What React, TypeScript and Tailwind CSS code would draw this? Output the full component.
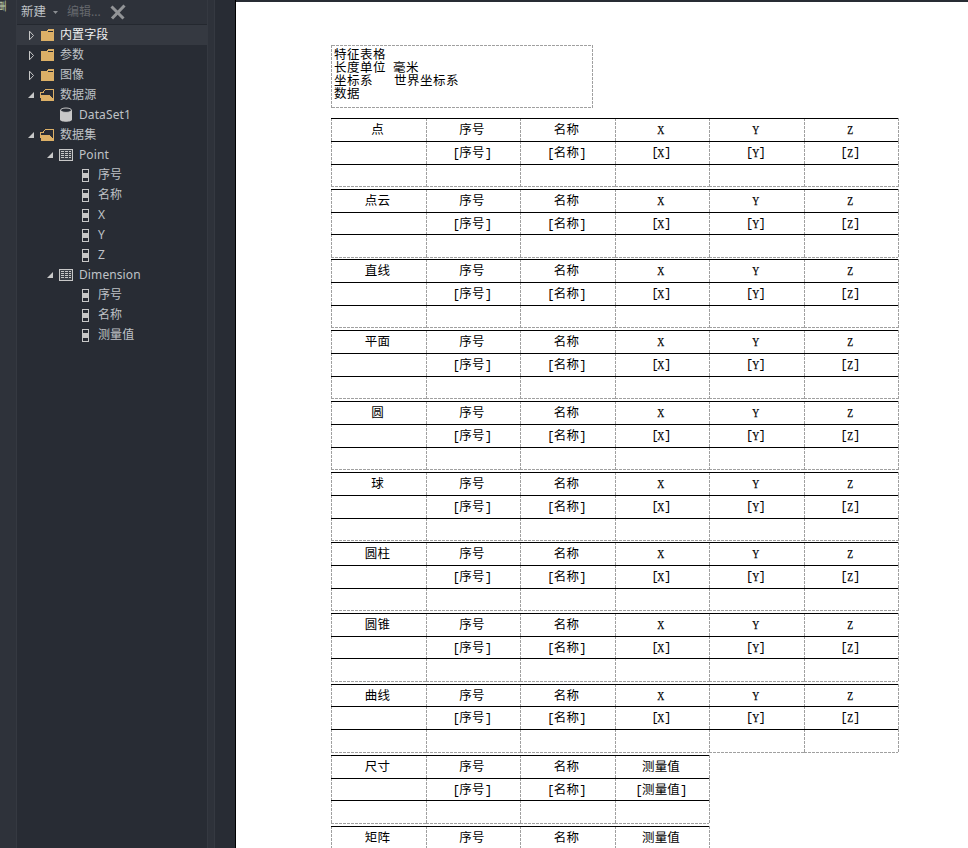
import React from "react";

type Kind = "folder" | "open" | "db" | "table" | "field";
type Node = { label: string; kind: Kind; level: number; active?: boolean };

const nodes: Node[] = [
  { label: "内置字段", kind: "folder", level: 0, active: true },
  { label: "参数", kind: "folder", level: 0 },
  { label: "图像", kind: "folder", level: 0 },
  { label: "数据源", kind: "open", level: 0 },
  { label: "DataSet1", kind: "db", level: 1 },
  { label: "数据集", kind: "open", level: 0 },
  { label: "Point", kind: "table", level: 1 },
  { label: "序号", kind: "field", level: 2 },
  { label: "名称", kind: "field", level: 2 },
  { label: "X", kind: "field", level: 2 },
  { label: "Y", kind: "field", level: 2 },
  { label: "Z", kind: "field", level: 2 },
  { label: "Dimension", kind: "table", level: 1 },
  { label: "序号", kind: "field", level: 2 },
  { label: "名称", kind: "field", level: 2 },
  { label: "测量值", kind: "field", level: 2 },
];

const indent = ["pl-[10px]", "pl-[29px]", "pl-[48px]"];

function Arrow({ kind }: { kind: Kind }) {
  return (
    <svg className="h-5 w-[10px] shrink-0" viewBox="0 0 10 20" fill="none">
      {kind === "folder" && <path d="M2.5 6.2v8.6l4-4.3z" stroke="#c8c8c8" />}
      {(kind === "open" || kind === "table") && <path d="M7 7v6H1z" fill="#c8c8c8" />}
    </svg>
  );
}

function Icon({ kind }: { kind: Kind }) {
  return (
    <svg className="ml-[3px] h-5 w-[18px] shrink-0" viewBox="0 0 18 20" fill="none" shapeRendering="crispEdges">
      {kind === "folder" && (
        <>
          <path d="M1 6h6V5h1V4h6v12H1z" fill="#dcb067" />
          <path d="M8 6.5h5" stroke="#282c34" />
        </>
      )}
      {kind === "open" && (
        <g>
          <path d="M.5 12V7.5h3v-1l2-2h8v11" stroke="#dcb067" />
          <path d="M0 10h9l4 4v2H1z" fill="#dcb067" />
        </g>
      )}
      {kind === "db" && (
        <g shapeRendering="auto">
          <path d="M1 5v9.5c0 3 12 3 12 0V5z" fill="#c8c8c8" />
          <ellipse cx="7" cy="5.2" rx="5.5" ry="2.2" fill="#282c34" stroke="#c8c8c8" />
        </g>
      )}
      {kind === "table" && (
        <>
          <path d="M.5 4.5h13v11H.5z" fill="#3c4047" stroke="#c8c8c8" />
          <path
            d="M2 6.5h10M2 8.5h10M2 10.5h10M2 12.5h10"
            stroke="#c8c8c8"
            strokeDasharray="3 1"
          />
        </>
      )}
      {kind === "field" && (
        <>
          <path d="M4 4h7v13H4z" fill="#c8c8c8" />
          <path d="M5 5h5v3H5zM5 13h5v3H5z" fill="#282c34" />
        </>
      )}
    </svg>
  );
}

function Sidebar() {
  return (
    <aside className="flex h-full w-[236px] shrink-0 bg-[#282c34] font-['Noto_Sans','Noto_Sans_CJK_SC',sans-serif] text-[12px] text-[#bfc2c6]">
      <div className="h-full w-4 shrink-0 overflow-hidden bg-[#2e323a]">
        <div className="-ml-[5px] h-3 w-3 -rotate-90 text-[12px] leading-[12px] text-[#b5c4a5]">量</div>
      </div>
      <div className="h-full w-[192px] shrink-0 border-x border-[#353941]">
        <div className="flex h-[25px] items-center border-b border-[#24282f] bg-[#2e323a] pl-[4px]">
          <span className="w-[26px] whitespace-nowrap text-[12.5px] leading-5">新建</span>
          <svg className="ml-[6px] h-[3px] w-[5px]" viewBox="0 0 5 3">
            <path d="M0 0h5L2.5 3z" fill="#8b8e92" />
          </svg>
          <span className="ml-[9px] w-[34px] whitespace-nowrap text-[12px] leading-5 text-[#65686d]">编辑...</span>
          <svg className="ml-[9px] h-4 w-4" viewBox="0 0 16 16">
            <path d="M1.5 2.5l12 12M14.5 1.5L2 14.5" stroke="#929497" strokeWidth="3" />
          </svg>
        </div>
        {nodes.map((n, i) => (
          <div
            key={i}
            className={`flex h-5 items-center ${indent[n.level]} ${n.active ? "bg-[#353941] text-[#f0f0f0]" : ""}`}
          >
            <Arrow kind={n.kind} />
            <Icon kind={n.kind} />
            <span className="ml-[2px] whitespace-nowrap leading-5 tracking-[0.1px]">{n.label}</span>
          </div>
        ))}
      </div>
      <div className="h-full w-[7px] shrink-0 border-r border-[#353941] bg-[#2e323a]" />
      <div className="h-full grow border-r border-black" />
    </aside>
  );
}

const xyz = ["序号", "名称", "X", "Y", "Z"];
const measured = ["序号", "名称", "测量值"];
type Block = { title: string; rows: [string, string, string]; gap: string; fields: string[] };

const blocks: Block[] = [
  { title: "点", rows: ["h-[23px]", "h-[23px]", "h-[23px]"], gap: "mb-[2px]", fields: xyz },
  { title: "点云", rows: ["h-[23px]", "h-[22px]", "h-[24px]"], gap: "mb-[1px]", fields: xyz },
  { title: "直线", rows: ["h-[23px]", "h-[23px]", "h-[23px]"], gap: "mb-[2px]", fields: xyz },
  { title: "平面", rows: ["h-[23px]", "h-[23px]", "h-[23px]"], gap: "mb-[2px]", fields: xyz },
  { title: "圆", rows: ["h-[23px]", "h-[23px]", "h-[23px]"], gap: "mb-[2px]", fields: xyz },
  { title: "球", rows: ["h-[23px]", "h-[23px]", "h-[23px]"], gap: "mb-[1px]", fields: xyz },
  { title: "圆柱", rows: ["h-[23px]", "h-[23px]", "h-[23px]"], gap: "mb-[2px]", fields: xyz },
  { title: "圆锥", rows: ["h-[23px]", "h-[22px]", "h-[24px]"], gap: "mb-[2px]", fields: xyz },
  { title: "曲线", rows: ["h-[22px]", "h-[23px]", "h-[24px]"], gap: "mb-[2px]", fields: xyz },
  { title: "尺寸", rows: ["h-[23px]", "h-[22px]", "h-[24px]"], gap: "mb-[2px]", fields: measured },
];

const widths = ["w-[95px]", "w-[94px]", "w-[95px]", "w-[94px]", "w-[95px]", "w-[94px]"];

const dashX = "bg-[repeating-linear-gradient(90deg,#a0a0a0_0_3px,transparent_3px_4px)]";
const dashY = "bg-[repeating-linear-gradient(180deg,#a0a0a0_0_3px,transparent_3px_4px)]";

function Chars({ text }: { text: string }) {
  const bracketed = text.startsWith("[");
  const body = bracketed ? text.slice(1, -1) : text;
  const latin = /^[XYZ]$/.test(body);
  return (
    <span className={`flex whitespace-nowrap ${latin ? "-translate-y-px" : ""}`}>
      {bracketed && <span className="tracking-[-0.7px]">[</span>}
      {latin ? (
        <span className="flex w-[6px] justify-center">
          <span className="scale-x-[0.72] font-['Liberation_Serif',serif] text-[13.5px] tracking-normal [-webkit-text-stroke:0.25px_black]">
            {body}
          </span>
        </span>
      ) : (
        <span>{body}</span>
      )}
      {bracketed && <span className="tracking-[-0.7px]">]</span>}
    </span>
  );
}

function Cell({ text, last }: { text: string; last: boolean }) {
  return (
    <>
      <div className={`h-full w-px shrink-0 ${dashY}`} />
      <div className="-ml-px flex grow flex-col">
        <div className="h-px shrink-0 bg-black" />
        <div className="flex min-h-0 grow items-start justify-center pr-[2px] pt-[3px] leading-[18px]">
          {text && <Chars text={text} />}
        </div>
        {last && <div className={`h-px shrink-0 ${dashX}`} />}
      </div>
    </>
  );
}

function Row({ cells, height, last = false }: { cells: string[]; height: string; last?: boolean }) {
  return (
    <div className={`flex w-max shrink-0 ${height}`}>
      {cells.map((c, i) => (
        <div key={i} className={`flex ${widths[i]}`}>
          <Cell text={c} last={last} />
        </div>
      ))}
      <div className={`-mr-px h-full w-px ${dashY}`} />
    </div>
  );
}

function FeatureTable({ block }: { block: Block }) {
  return (
    <div className={`w-max shrink-0 ${block.gap}`}>
      <Row cells={[block.title, ...block.fields]} height={block.rows[0]} />
      <Row cells={["", ...block.fields.map((f) => `[${f}]`)]} height={block.rows[1]} />
      <Row cells={["", ...block.fields.map(() => "")]} height={block.rows[2]} last />
    </div>
  );
}

export default function App() {
  return (
    <div className="flex h-[848px] w-[968px] overflow-hidden bg-[#282c34]">
      <Sidebar />
      <div className="flex h-full grow flex-col">
        <div className="h-[2px] shrink-0 bg-[#282c34]" />
        <main className="flex min-h-0 grow flex-col overflow-hidden bg-white pl-[95px] pt-[43px] font-['Liberation_Mono','Noto_Sans_CJK_SC',monospace] text-[12.5px] tracking-[0.2px] text-black">
          <div className="mb-[10px] flex h-[63px] w-[262px] shrink-0">
            <div className={`w-px ${dashY}`} />
            <div className="flex grow flex-col">
              <div className={`h-px shrink-0 ${dashX}`} />
              <div className="grow whitespace-pre pl-[2px] pt-[4px] leading-[13px] tracking-[0.5px]">
                <div>特征表格</div>
                <div className="flex gap-[7px]"><span>长度单位</span><span>毫米</span></div>
                <div className="flex gap-[21px]"><span>坐标系</span><span>世界坐标系</span></div>
                <div>数据</div>
              </div>
              <div className={`h-px shrink-0 ${dashX}`} />
            </div>
            <div className={`w-px ${dashY}`} />
          </div>
          {blocks.map((b) => (
            <FeatureTable key={b.title} block={b} />
          ))}
          <Row cells={["矩阵", ...measured]} height="h-[23px]" />
        </main>
      </div>
    </div>
  );
}
